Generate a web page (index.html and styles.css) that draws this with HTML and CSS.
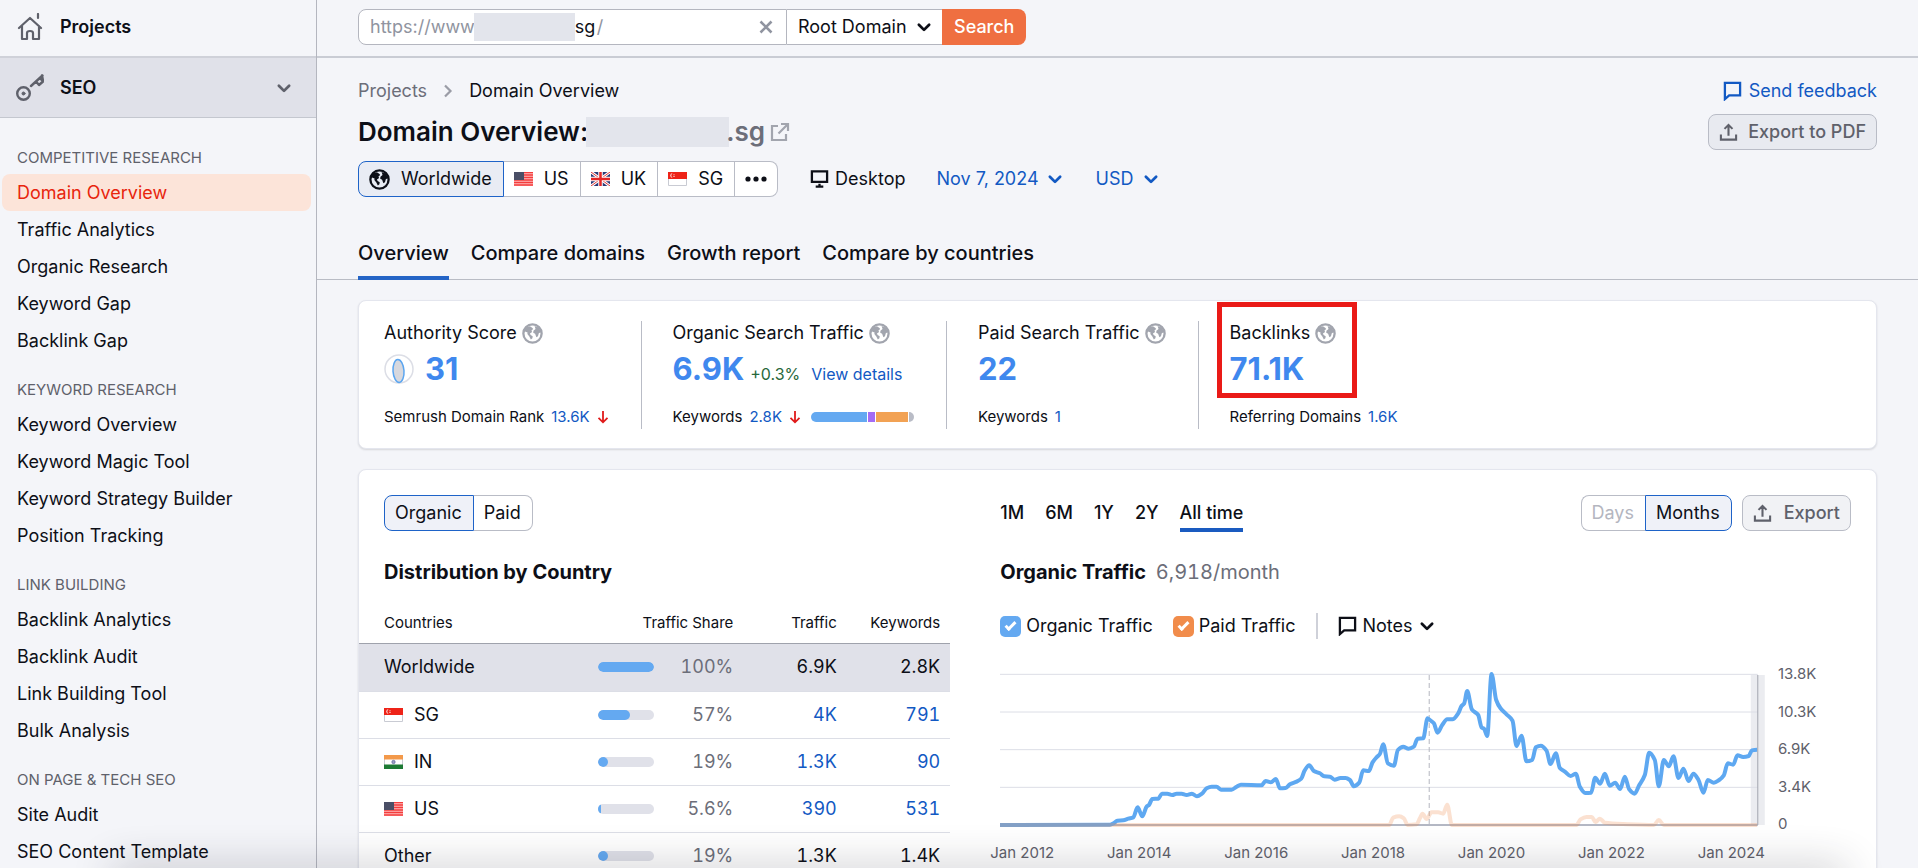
FILE: index.html
```html
<!DOCTYPE html>
<html lang="en">
<head>
    <meta charset="UTF-8">
    <title>Domain Overview</title>
    <link rel="stylesheet" href="styles.css">
</head>
<body>
    <!-- shared icons -->
    <svg class="sprite" aria-hidden="true">
        <symbol id="i-chevron" viewBox="0 0 14 14">
            <path d="M2.500 5L7 9.500 11.500 5" fill="none" stroke="currentColor" stroke-width="2.400" stroke-linecap="round" stroke-linejoin="round"/>
        </symbol>
        <symbol id="i-globe" viewBox="0 0 20 20">
            <circle cx="10" cy="10" r="8.700" fill="none" stroke="currentColor" stroke-width="2.200"/>
            <path d="M2 6.500l2-2.500 3.500-1 2.200 1.500 1 1.200-1.700 1.500.6 1.400-2 1.400.6 1.500 2 1-.3 2-1.500 1.300-1.400-3-1.900-2.300.2-1.500-2.500-1z" fill="currentColor"/>
            <path d="M12 2.800l4 1.400 2.300 4.300-2.300 1.200-.8 2.800-1.500 1-1.200-3.300-1.800-.8.200-2 2-1.800z" fill="currentColor"/>
        </symbol>
        <symbol id="i-export" viewBox="0 0 20 20">
            <path d="M10 14V3M5.800 6.700L10 2.500l4.200 4.200M2 12.500V18h16v-5.500" fill="none" stroke="currentColor" stroke-width="2.200"/>
        </symbol>
        <symbol id="i-note" viewBox="0 0 20 20">
            <path d="M2 1.500h16v13H6.500L2 18.500z" fill="none" stroke="currentColor" stroke-width="2.400"/>
        </symbol>
        <symbol id="i-down" viewBox="0 0 12 14">
            <path d="M6 1v11M1.500 7.800L6 12.300l4.500-4.500" fill="none" stroke="currentColor" stroke-width="1.800"/>
        </symbol>
        <symbol id="f-us" viewBox="0 0 19 14">
            <path fill="#fbb" d="M0 0h19v14H0z"/>
            <path d="M0 .5h19M0 3h19M0 5.500h19M0 8h19M0 10.500h19M0 13h19" stroke="#f33d3d" stroke-width="1.600"/>
            <path fill="#4a4f66" d="M0 0h10v8H0z"/>
        </symbol>
        <symbol id="f-uk" viewBox="0 0 19 14">
            <path fill="#2b3a78" d="M0 0h19v14H0z"/>
            <path d="M0 0l19 14M19 0L0 14" stroke="#fff" stroke-width="3"/>
            <path d="M0 0l19 14M19 0L0 14" stroke="#e03a3a" stroke-width="1"/>
            <path d="M9.500 0v14M0 7h19" stroke="#fff" stroke-width="4.500"/>
            <path d="M9.500 0v14M0 7h19" stroke="#e32525" stroke-width="2.500"/>
        </symbol>
        <symbol id="f-sg" viewBox="0 0 19 14">
            <path fill="#fff" stroke="#c9cbd3" d="M.5.5h18v13H.5z"/>
            <path fill="#ee2318" d="M0 0h19v7H0z"/>
            <path d="M4.600 1.200a2.300 2.300 0 1 0 0 4.600 2.600 2.600 0 0 1 0-4.600z" fill="#fff"/>
            <path d="M5.500 2.500h1M5 4.300h2" stroke="#ffd5d0" stroke-width=".8"/>
        </symbol>
        <symbol id="f-in" viewBox="0 0 19 14">
            <path fill="#fff" stroke="#c9cbd3" d="M.5.5h18v13H.5z"/>
            <path fill="#f3994a" d="M0 0h19v4.500H0z"/>
            <path fill="#1d7a34" d="M0 9.500h19V14H0z"/>
            <circle cx="9.500" cy="7" r="1.700" fill="#9aa0c4" stroke="#4c5590" stroke-width=".6"/>
        </symbol>
    </svg>

    <div class="layout">
        <aside class="sidebar">
            <a class="side-top" href="#">
                <svg class="side-icon" viewBox="0 0 28 28" fill="none" stroke="currentColor" stroke-width="2.200" stroke-linejoin="round" stroke-linecap="round">
                    <path d="M3 15L14 5l11 10M6 13v13h5v-6q0-2 3-2t3 2v6h6V13M22 1v4"/>
                </svg>
                Projects
            </a>
            <button class="side-top side-group">
                <svg class="side-icon" viewBox="0 0 28 28" fill="none" stroke="currentColor" stroke-width="2.400" stroke-linejoin="round" stroke-linecap="round">
                    <circle cx="7.500" cy="19.500" r="6.300"/>
                    <circle cx="7.500" cy="19.500" r="1.500" fill="currentColor" stroke-width="1"/>
                    <path d="M15 12L26.500 1.500M20 7.500l3 3.500 4-3.500-3-3.500M26 1.500l1 5"/>
                </svg>
                SEO
                <svg class="chevron"><use href="#i-chevron"/></svg>
            </button>
            <nav class="side-nav">
                <h2>Competitive Research</h2>
                <a class="active" href="#">Domain Overview</a>
                <a href="#">Traffic Analytics</a>
                <a href="#">Organic Research</a>
                <a href="#">Keyword Gap</a>
                <a href="#">Backlink Gap</a>
                <h2>Keyword Research</h2>
                <a href="#">Keyword Overview</a>
                <a href="#">Keyword Magic Tool</a>
                <a href="#">Keyword Strategy Builder</a>
                <a href="#">Position Tracking</a>
                <h2>Link Building</h2>
                <a href="#">Backlink Analytics</a>
                <a href="#">Backlink Audit</a>
                <a href="#">Link Building Tool</a>
                <a href="#">Bulk Analysis</a>
                <h2>On Page &amp; Tech SEO</h2>
                <a href="#">Site Audit</a>
                <a href="#">SEO Content Template</a>
            </nav>
        </aside>

        <main class="main">
            <form class="topbar">
                <div class="url-box">
                    <label for="url">https://www.</label>
                    <span class="smudge"></span>
                    <input id="url" type="text" value="sg"><span>/</span>
                    <button class="clear" type="button" aria-label="Clear">
                        <svg viewBox="0 0 14 14"><path d="M1.500 1.500l11 11M12.500 1.500l-11 11" stroke="currentColor" stroke-width="2.600"/></svg>
                    </button>
                </div>
                <div class="select scope">
                    <select aria-label="Scope"><option>Root Domain</option></select>
                    <svg class="chevron"><use href="#i-chevron"/></svg>
                </div>
                <button class="search" type="button">Search</button>
            </form>

            <header class="page-head">
                <div class="head-row">
                    <div class="crumbs">
                        <a href="#">Projects</a>
                        <svg viewBox="0 0 10 14"><path d="M2 1.500L7.500 7 2 12.500" fill="none" stroke="currentColor" stroke-width="2.200"/></svg>
                        <span>Domain Overview</span>
                    </div>
                    <a class="feedback" href="#"><svg class="icon"><use href="#i-note"/></svg>Send feedback</a>
                </div>
                <div class="head-row title-row">
                    <h1>Domain Overview:<span class="smudge"></span><a href="#">.sg<svg viewBox="0 0 20 20"><path d="M8 4H2v14h14v-6M11 2h7v7M17.500 2.500L8.500 11.500" fill="none" stroke="currentColor" stroke-width="2.200"/></svg></a></h1>
                    <button class="btn"><svg class="icon"><use href="#i-export"/></svg>Export to PDF</button>
                </div>
                <div class="filters">
                    <div class="group">
                        <button class="on"><svg class="globe"><use href="#i-globe"/></svg>Worldwide</button>
                        <button><svg class="flag"><use href="#f-us"/></svg>US</button>
                        <button><svg class="flag"><use href="#f-uk"/></svg>UK</button>
                        <button><svg class="flag"><use href="#f-sg"/></svg>SG</button>
                        <button class="more" aria-label="More countries">
                            <svg viewBox="0 0 22 6" fill="currentColor"><circle cx="3" cy="3" r="2.600"/><circle cx="11" cy="3" r="2.600"/><circle cx="19" cy="3" r="2.600"/></svg>
                        </button>
                    </div>
                    <span class="device">
                        <svg viewBox="0 0 20 20"><path d="M2 2h16v11H2zM6 18h8M10 15v3" fill="none" stroke="currentColor" stroke-width="2.400"/></svg>
                        Desktop
                    </span>
                    <button class="link-btn">Nov 7, 2024<svg class="chevron"><use href="#i-chevron"/></svg></button>
                    <div class="select currency">
                        <select aria-label="Currency"><option>USD</option></select>
                        <svg class="chevron"><use href="#i-chevron"/></svg>
                    </div>
                </div>
                <nav class="tabs">
                    <a class="active" href="#">Overview</a>
                    <a href="#">Compare domains</a>
                    <a href="#">Growth report</a>
                    <a href="#">Compare by countries</a>
                </nav>
            </header>

            <div class="content">
                <section class="card stats">
                    <div class="stat">
                        <h3>Authority Score <svg class="globe"><use href="#i-globe"/></svg></h3>
                        <p class="value">
                            <svg class="score" viewBox="0 0 30 30"><circle cx="15" cy="15" r="14" fill="#fff" stroke="#dcdee6" stroke-width="1.500"/><ellipse cx="14.500" cy="17" rx="5.500" ry="11.500" fill="#d7d8de" stroke="#5aa5f0" stroke-width="1.500" transform="rotate(-4 14.500 17)"/></svg>
                            <a href="#">31</a>
                        </p>
                        <p class="foot">Semrush Domain Rank <a href="#">13.6K</a><svg class="down"><use href="#i-down"/></svg></p>
                    </div>
                    <div class="stat">
                        <h3>Organic Search Traffic <svg class="globe"><use href="#i-globe"/></svg></h3>
                        <p class="value"><a href="#">6.9K</a><span class="up">+0.3%</span><a class="details" href="#">View details</a></p>
                        <p class="foot">Keywords <a href="#">2.8K</a><svg class="down"><use href="#i-down"/></svg>
                            <span class="intents"><i class="blue"></i><i class="violet"></i><i class="orange"></i><i class="gray"></i></span>
                        </p>
                    </div>
                    <div class="stat">
                        <h3>Paid Search Traffic <svg class="globe"><use href="#i-globe"/></svg></h3>
                        <p class="value"><a href="#">22</a></p>
                        <p class="foot">Keywords <a href="#">1</a></p>
                    </div>
                    <div class="stat marked">
                        <h3>Backlinks <svg class="globe"><use href="#i-globe"/></svg></h3>
                        <p class="value"><a href="#">71.1K</a></p>
                        <p class="foot">Referring Domains <a href="#">1.6K</a></p>
                    </div>
                </section>

                <section class="card report">
                    <div class="countries">
                        <div class="bar">
                            <div class="group">
                                <button class="on">Organic</button>
                                <button>Paid</button>
                            </div>
                        </div>
                        <h2>Distribution by Country</h2>
                        <table>
                            <thead>
                                <tr><th>Countries</th><th>Traffic Share</th><th>Traffic</th><th>Keywords</th></tr>
                            </thead>
                            <tbody>
                                <tr class="selected">
                                    <td>Worldwide</td>
                                    <td><div class="share"><span class="meter"><i style="width: 100%"></i></span>100%</div></td>
                                    <td>6.9K</td><td>2.8K</td>
                                </tr>
                                <tr>
                                    <td><svg class="flag"><use href="#f-sg"/></svg>SG</td>
                                    <td><div class="share"><span class="meter"><i style="width: 57%"></i></span>57%</div></td>
                                    <td><a href="#">4K</a></td><td><a href="#">791</a></td>
                                </tr>
                                <tr>
                                    <td><svg class="flag"><use href="#f-in"/></svg>IN</td>
                                    <td><div class="share"><span class="meter"><i style="width: 19%"></i></span>19%</div></td>
                                    <td><a href="#">1.3K</a></td><td><a href="#">90</a></td>
                                </tr>
                                <tr>
                                    <td><svg class="flag"><use href="#f-us"/></svg>US</td>
                                    <td><div class="share"><span class="meter"><i style="width: 5.6%"></i></span>5.6%</div></td>
                                    <td><a href="#">390</a></td><td><a href="#">531</a></td>
                                </tr>
                                <tr class="other">
                                    <td>Other</td>
                                    <td><div class="share"><span class="meter"><i style="width: 19%"></i></span>19%</div></td>
                                    <td>1.3K</td><td>1.4K</td>
                                </tr>
                            </tbody>
                        </table>
                    </div>

                    <div class="trend">
                        <div class="bar">
                            <div class="ranges">
                                <button>1M</button>
                                <button>6M</button>
                                <button>1Y</button>
                                <button>2Y</button>
                                <button class="active">All time</button>
                            </div>
                            <div class="actions">
                                <div class="group">
                                    <button disabled>Days</button>
                                    <button class="on">Months</button>
                                </div>
                                <button class="btn"><svg class="icon"><use href="#i-export"/></svg>Export</button>
                            </div>
                        </div>
                        <h2>Organic Traffic <span>6,918/month</span></h2>
                        <div class="legend">
                            <label><input type="checkbox" class="blue" checked>Organic Traffic</label>
                            <label><input type="checkbox" class="orange" checked>Paid Traffic</label>
                            <button class="notes"><svg class="icon"><use href="#i-note"/></svg>Notes<svg class="chevron"><use href="#i-chevron"/></svg></button>
                        </div>
                        <div class="chart">
                            <div class="plot">
                                <svg viewBox="0 0 2295 498" preserveAspectRatio="none">
                                    <path class="hover-month" d="M2253 30h42v450h-42z"/>
                                    <path class="grid" d="M0 28h2274M0 141h2274M0 254h2274M0 367h2274"/>
                                    <path class="axis" d="M0 480h2274"/>
                                    <path class="note-line" d="M1288 30v450"/>
                                    <path class="line organic" id="organic"/>
                                    <path class="line paid" id="paid"/>
                                    <path class="cursor" d="M2274 30v450"/>
                                </svg>
                                <div class="x-axis">
                                    <span>Jan 2012</span><span>Jan 2014</span><span>Jan 2016</span><span>Jan 2018</span><span>Jan 2020</span><span>Jan 2022</span><span>Jan 2024</span>
                                </div>
                            </div>
                            <div class="y-axis">
                                <span>13.8K</span><span>10.3K</span><span>6.9K</span><span>3.4K</span><span>0</span>
                            </div>
                        </div>
                    </div>
                </section>
            </div>
        </main>
    </div>
    <div class="bottom-shade"></div>
    <script src="chart.js"></script>
</body>
</html>
```

FILE: styles.css
```css
* {
    box-sizing: border-box;
    margin: 0;
    padding: 0;
}

body {
    font-family: Inter, "Liberation Sans", sans-serif;
    font-size: 18px;
    line-height: 24px;
    color: #0d0f17;
    background: #f4f5f9;
    height: 100vh;
    overflow: hidden;
}

a {
    color: #1259c3;
    text-decoration: none;
}

button,
input,
select {
    font: inherit;
    color: inherit;
    background: none;
    border: none;
    outline: none;
}

button {
    cursor: pointer;
}

svg {
    display: block;
    flex: none;
}

.sprite {
    position: absolute;
    width: 0;
    height: 0;
}

.icon {
    width: 19px;
    height: 20px;
}

.chevron {
    width: 16px;
    height: 16px;
}

.globe {
    width: 21px;
    height: 21px;
}

.flag {
    width: 19px;
    height: 14px;
}

.smudge {
    background: #e3e5ec;
}

.layout {
    display: flex;
    height: 100%;
    overflow: hidden;
}

/* sidebar */
.sidebar {
    flex: none;
    width: 317px;
    border-right: 1px solid #b4b6bf;
}

.side-top {
    display: flex;
    align-items: center;
    gap: 16px;
    width: 100%;
    height: 58px;
    padding: 0 24px 2px 16px;
    border-bottom: 2px solid #cfd1d9;
    color: inherit;
    font-weight: 600;
}

.side-group {
    height: 60px;
    padding-bottom: 0;
    border-bottom: 1px solid #c4c7cf;
    background: #e0e1e9;
}

.side-icon {
    width: 28px;
    height: 28px;
    color: #5f616b;
}

.side-group .chevron {
    margin-left: auto;
    color: #5f616b;
}

.side-nav {
    padding: 3px 5px 0 2px;
}

.side-nav h2 {
    padding: 22px 15px 7px;
    font-size: 15px;
    font-weight: 400;
    line-height: 18px;
    text-transform: uppercase;
    color: #5f616b;
}

.side-nav h2:first-child {
    padding-top: 28px;
}

.side-nav a {
    display: block;
    padding: 0 15px;
    line-height: 37px;
    border-radius: 8px;
    color: inherit;
}

.side-nav a.active {
    background: #fce4d9;
    color: #e8250d;
}

/* top bar */
.main {
    flex: 1;
    min-width: 0;
}

.topbar {
    display: flex;
    height: 58px;
    padding: 9px 41px 0;
    border-bottom: 2px solid #c9ccd4;
}

.url-box {
    display: flex;
    align-items: center;
    width: 429px;
    height: 36px;
    padding: 0 13px 0 11px;
    border: 1px solid #b4b6bf;
    border-radius: 8px 0 0 8px;
    background: white;
    color: #9094a0;
}

.url-box .smudge {
    width: 101px;
    height: 28px;
    margin-left: -5px;
}

.url-box input {
    width: 22px;
    color: #0d0f17;
}

.clear {
    margin-left: auto;
}

.clear svg {
    width: 14px;
    height: 14px;
}

.select {
    position: relative;
    display: flex;
    align-items: center;
}

.select select {
    appearance: none;
    padding-right: 25px;
    cursor: pointer;
}

.select .chevron {
    margin-left: -16px;
    pointer-events: none;
}

.scope {
    height: 36px;
    padding: 0 10px 0 11px;
    border: 1px solid #b4b6bf;
    border-width: 1px 0;
    background: white;
}

.search {
    height: 36px;
    padding: 0 12px;
    border-radius: 0 8px 8px 0;
    background: #ef6f41;
    color: white;
    font-weight: 500;
}

/* page head */
.page-head {
    padding: 21px 41px 0;
    border-bottom: 1px solid #b9bcc5;
}

.head-row {
    display: flex;
    align-items: center;
    justify-content: space-between;
}

.crumbs {
    display: flex;
    align-items: center;
    gap: 16px;
}

.crumbs a {
    color: #6c6e79;
}

.crumbs svg {
    width: 10px;
    height: 14px;
    color: #9a9ca6;
}

.feedback {
    display: flex;
    align-items: center;
    gap: 7px;
}

.title-row {
    padding-top: 11px;
}

.title-row h1 {
    display: flex;
    align-items: center;
    font-size: 26px;
    font-weight: 600;
    line-height: 32px;
}

.title-row .smudge {
    width: 143px;
    height: 30px;
    margin-left: -2px;
}

.title-row h1 a {
    display: flex;
    align-items: center;
    gap: 5px;
    margin-left: -3px;
    color: #6c6e79;
}

.title-row h1 svg {
    width: 20px;
    height: 20px;
    color: #a2a5ae;
}

.btn {
    display: flex;
    align-items: center;
    gap: 10px;
    height: 36px;
    padding: 0 10px;
    border: 1px solid #b9bcc6;
    border-radius: 8px;
    background: #e8eaf0;
    color: #5f616b;
    font-weight: 500;
}

.filters {
    display: flex;
    align-items: center;
    padding-top: 11px;
}

.group {
    display: flex;
}

.group button {
    display: flex;
    align-items: center;
    gap: 11px;
    height: 36px;
    padding: 0 11px 0 10px;
    border: 1px solid #b9bcc6;
    border-left-width: 0;
    background: white;
}

.group button:first-child {
    border-left-width: 1px;
    border-radius: 8px 0 0 8px;
}

.group button:last-child {
    border-radius: 0 8px 8px 0;
}

.group button.on {
    border: 1px solid #1e63c8;
    background: #e9ecf4;
}

.group button:disabled {
    border-right-width: 0;
    color: #b4b6bf;
}

.group .more {
    padding: 0 10px;
}

.more svg {
    width: 22px;
    height: 6px;
}

.device {
    display: flex;
    align-items: center;
    gap: 6px;
    margin: 0 31px 0 32px;
}

.device svg {
    width: 19px;
    height: 20px;
}

.link-btn {
    display: flex;
    align-items: center;
    gap: 8px;
    margin-right: 33px;
    color: #1259c3;
}

.currency {
    color: #1259c3;
}

.tabs {
    display: flex;
    gap: 22px;
    padding-top: 44px;
    font-size: 20px;
    font-weight: 500;
}

.tabs a {
    padding-bottom: 11px;
    border-bottom: 4px solid transparent;
    margin-bottom: -1px;
    color: inherit;
}

.tabs a.active {
    border-color: #2464c6;
}

/* cards */
.content {
    display: flex;
    flex-direction: column;
    gap: 20px;
    padding: 20px 41px 0;
}

.card {
    border: 1px solid #e4e6ee;
    border-radius: 8px;
    background: white;
    box-shadow: 0 1px 2px rgba(25, 27, 35, 0.14);
}

.stats {
    display: flex;
    padding: 20px 25px 19px;
}

.stat {
    padding-right: 32px;
}

.stat + .stat {
    padding-left: 31px;
    border-left: 1px solid #b9bcc6;
}

.stat h3 {
    display: flex;
    align-items: center;
    gap: 5px;
    font-size: 18px;
    font-weight: 400;
}

.stat .globe {
    color: #a2a5ae;
}

.value {
    display: flex;
    align-items: baseline;
    height: 48px;
    font-size: 16px;
}

.value a {
    font-size: 31px;
    font-weight: 700;
    line-height: 48px;
    color: #3f88ee;
}

.value .score {
    width: 30px;
    height: 30px;
    margin-right: 11px;
    align-self: center;
}

.value .up {
    margin-left: 6px;
    color: #28683b;
}

.value .details {
    margin-left: 11px;
    font-size: 16px;
    font-weight: 400;
    color: #1259c3;
}

.foot {
    display: flex;
    align-items: center;
    gap: 7px;
    padding-top: 12px;
    font-size: 15px;
    white-space: nowrap;
}

.down {
    width: 12px;
    height: 14px;
    color: #e01b1b;
}

.intents {
    display: flex;
    gap: 1px;
    width: 103px;
    height: 10px;
    margin-left: 3px;
    border-radius: 5px;
    overflow: hidden;
}

.intents .blue {
    flex: 56;
    background: #64a9f1;
}

.intents .violet {
    flex: 7;
    background: #a46cf5;
}

.intents .orange {
    flex: 32;
    background: #f2a254;
}

.intents .gray {
    flex: 5;
    background: #b9bcc6;
}

/* red frame over the backlinks figure */
.marked {
    position: relative;
}

.marked::before {
    content: "";
    position: absolute;
    top: -19px;
    left: 18px;
    width: 130px;
    height: 86px;
    border: 5px solid #ea1a17;
}

/* report */
.report {
    display: grid;
    grid-template-columns: 41fr 59fr;
    column-gap: 50px;
    padding: 25px 25px 0 0;
}

.report h2 {
    padding: 29px 0;
    font-size: 20px;
    font-weight: 700;
}

.report h2 span {
    margin-left: 5px;
    font-weight: 400;
    color: #6c6e79;
    font-variant-numeric: tabular-nums;
}

.bar {
    display: flex;
    align-items: center;
    justify-content: space-between;
    height: 36px;
}

.countries .bar,
.countries h2 {
    padding-left: 25px;
}

.countries h2 {
    padding-bottom: 19px;
}

.report .btn {
    gap: 12px;
    background: #f1f2f5;
}

.report .group .on {
    background: #eff1f8;
}

table {
    width: 100%;
    table-layout: fixed;
    border-collapse: collapse;
    font-variant-numeric: tabular-nums;
}

th {
    height: 40px;
    padding-right: 10px;
    font-size: 15px;
    font-weight: 400;
    text-align: right;
    border-bottom: 1px solid #9fa2ac;
}

th:first-child {
    width: 37%;
    padding-left: 25px;
    text-align: left;
}

th:nth-child(2) {
    width: 28%;
}

td {
    height: 47px;
    padding-right: 10px;
    text-align: right;
    border-bottom: 1px solid #dcdee6;
}

td:first-child {
    padding-left: 25px;
    text-align: left;
}

td .flag {
    display: inline-block;
    margin-right: 11px;
    vertical-align: -1px;
}

.selected td {
    height: 48px;
    background: #e0e1e9;
}

.other td {
    border-top: 1px solid #9fa2ac;
}

.share {
    display: flex;
    align-items: center;
    justify-content: space-between;
    padding-left: 20px;
    color: #6c6e79;
}

.meter {
    width: 56px;
    height: 10px;
    border-radius: 5px;
    background: #e0e1e9;
    overflow: hidden;
}

.meter i {
    display: block;
    height: 100%;
    border-radius: 5px;
    background: #64a9f1;
}

.ranges {
    display: flex;
    gap: 21px;
}

.ranges button {
    padding-top: 7px;
    padding-bottom: 3px;
    border-bottom: 4px solid transparent;
    font-weight: 500;
}

.ranges .active {
    border-color: #1a5bc0;
}

.actions {
    display: flex;
    gap: 10px;
}

.legend {
    display: flex;
    align-items: center;
    height: 26px;
}

.legend label {
    display: flex;
    align-items: center;
    gap: 5px;
    margin-right: 20px;
}

.legend input {
    display: grid;
    place-items: center;
    width: 21px;
    height: 21px;
    border-radius: 5px;
    appearance: none;
}

.legend input::after {
    content: "";
    width: 8px;
    height: 3px;
    margin-bottom: 3px;
    border: solid white;
    border-width: 0 0 3px 3px;
    transform: rotate(-45deg);
}

.legend .blue {
    background: #64a9f1;
}

.legend .orange {
    background: #f18c4b;
}

.notes {
    display: flex;
    align-items: center;
    gap: 6px;
    height: 26px;
    padding-left: 20px;
    border-left: 2px solid #cfd1d9;
}

/* chart */
.chart {
    display: flex;
    gap: 13px;
    padding-top: 26px;
    font-size: 15px;
    color: #5f616b;
}

.plot {
    flex: 1;
}

.plot svg {
    width: 100%;
    height: 166px;
}

.plot path {
    fill: none;
    vector-effect: non-scaling-stroke;
}

.plot .hover-month {
    fill: #ebecf0;
}

.plot .grid {
    stroke: #dcdee6;
    stroke-width: 1px;
}

.plot .axis {
    stroke: #b4b8c4;
    stroke-width: 2px;
}

.plot .note-line {
    stroke: #b4b6bf;
    stroke-dasharray: 5 3;
}

.plot .cursor {
    stroke: #a2a5ae;
}

.plot .line {
    stroke-width: 4px;
    stroke-linejoin: round;
}

.plot .organic {
    stroke: #5ea8f1;
}

.plot .paid {
    stroke: #f18c4b;
    opacity: 0.25;
}

.x-axis {
    display: flex;
    justify-content: space-between;
    padding-top: 10px;
    margin-left: -10px;
}

.y-axis {
    display: flex;
    flex-direction: column;
    justify-content: space-between;
    width: 73px;
    height: 174px;
    margin-top: -3px;
}

.bottom-shade {
    position: fixed;
    left: 110px;
    right: 70px;
    bottom: -20px;
    height: 20px;
    border-radius: 20px;
    box-shadow: 0 0 40px rgba(35, 38, 50, 0.3);
    pointer-events: none;
}
```

FILE: chart.js
```js
// points are in the viewBox units of the plot
const organic = [
    [0, 480], [330, 479], [342, 474], [352, 467], [370, 466], [385, 461], [400, 457], [413, 427], [427, 454],
    [440, 425], [447, 420], [457, 402], [475, 401], [486, 386], [502, 386], [517, 390], [530, 386], [545, 386],
    [560, 390], [576, 386], [591, 394], [606, 386], [620, 370], [635, 365], [650, 365], [663, 374], [695, 374],
    [710, 365], [723, 359], [785, 361], [797, 348], [813, 352], [828, 342], [840, 370], [857, 369], [870, 358],
    [890, 350], [904, 341], [914, 317], [928, 301], [942, 318], [960, 325], [973, 334], [990, 335], [1004, 344],
    [1022, 339], [1037, 339], [1050, 345], [1062, 364], [1078, 353], [1090, 316], [1107, 318], [1118, 292],
    [1130, 277], [1140, 267], [1150, 238], [1164, 295], [1182, 302], [1194, 255], [1210, 245], [1226, 251],
    [1242, 245], [1253, 221], [1270, 220], [1283, 160], [1290, 165], [1302, 175], [1313, 203], [1327, 180],
    [1342, 163], [1358, 163], [1375, 145], [1385, 123], [1393, 115], [1402, 78], [1416, 133], [1435, 150],
    [1445, 187], [1453, 192], [1462, 213], [1475, 27], [1489, 105], [1502, 130], [1520, 148], [1538, 167],
    [1550, 243], [1565, 212], [1580, 289], [1597, 285], [1608, 247], [1623, 242], [1640, 257], [1652, 297],
    [1668, 265], [1680, 309], [1695, 320], [1712, 333], [1728, 326], [1740, 365], [1756, 384], [1774, 383],
    [1786, 338], [1801, 356], [1815, 326], [1830, 362], [1846, 353], [1861, 372], [1875, 335], [1888, 373],
    [1904, 386], [1918, 361], [1935, 330], [1948, 263], [1965, 285], [1977, 364], [1992, 285], [2007, 304],
    [2021, 274], [2036, 339], [2051, 311], [2066, 348], [2081, 326], [2096, 345], [2111, 383], [2124, 345],
    [2142, 353], [2158, 345], [2172, 331], [2184, 295], [2200, 299], [2213, 271], [2230, 276], [2247, 273],
    [2256, 256], [2272, 254]
];

const paid = [
    [0, 480], [1168, 480], [1180, 458], [1198, 454], [1212, 460], [1223, 480], [1250, 478], [1260, 460],
    [1268, 446], [1280, 462], [1295, 442], [1315, 442], [1330, 446], [1342, 419], [1356, 480], [1730, 480],
    [1742, 463], [1760, 456], [1776, 456], [1787, 471], [1800, 461], [1815, 473], [1870, 477], [1962, 480],
    [1977, 465], [1992, 480], [2272, 480]
];

// smooth line that never overshoots its points
function linePath(points) {
    const slope = (i) => {
        if (i === 0 || i === points.length - 1) return 0;
        const a = (points[i][1] - points[i - 1][1]) / (points[i][0] - points[i - 1][0]);
        const b = (points[i + 1][1] - points[i][1]) / (points[i + 1][0] - points[i][0]);
        return a * b <= 0 ? 0 : (2 * a * b) / (a + b);
    };

    let d = `M${points[0]}`;
    for (let i = 1; i < points.length; i++) {
        const [x0, y0] = points[i - 1];
        const [x1, y1] = points[i];
        const dx = (x1 - x0) / 3;
        d += `C${x0 + dx},${y0 + slope(i - 1) * dx} ${x1 - dx},${y1 - slope(i) * dx} ${x1},${y1}`;
    }
    return d;
}

document.getElementById('organic').setAttribute('d', linePath(organic));
document.getElementById('paid').setAttribute('d', linePath(paid));
```
